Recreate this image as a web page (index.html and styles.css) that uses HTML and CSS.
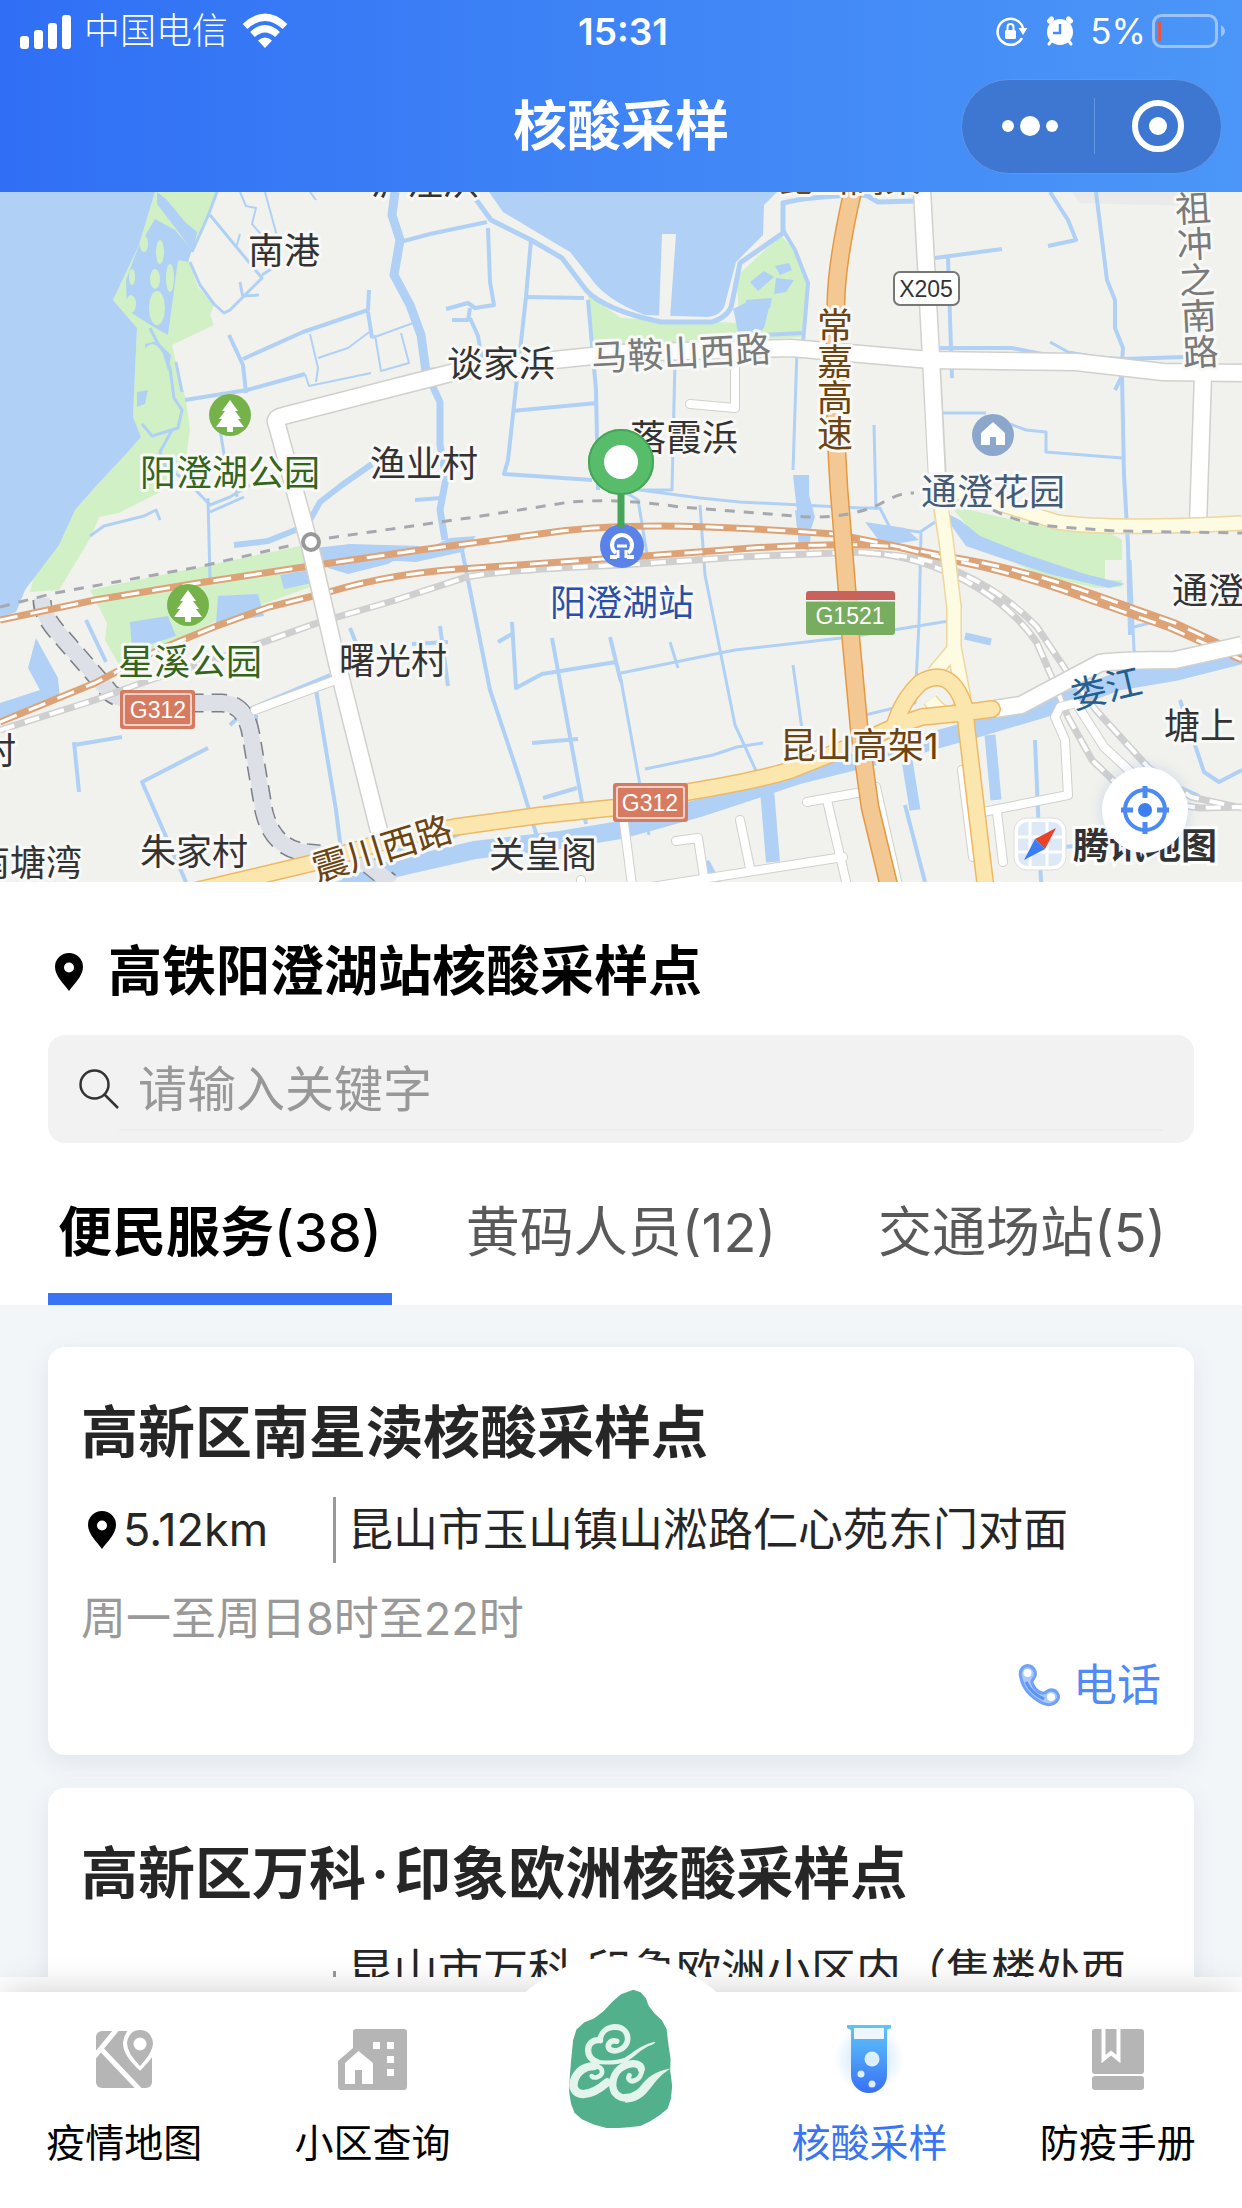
FILE: index.html
```html
<!DOCTYPE html>
<html lang="zh-CN">
<head>
<meta charset="utf-8">
<meta name="viewport" content="width=device-width, initial-scale=1">
<title>核酸采样</title>
<link rel="stylesheet" href="styles.css">
</head>
<body>
<div class="app">
  <header class="header">
    <div class="status">
      <div class="status-side">
        <svg class="i-signal" viewBox="0 0 52 38" aria-hidden="true"><g fill="#fff"><rect x="0" y="24" width="9" height="13" rx="3"/><rect x="14" y="18" width="9" height="19" rx="3"/><rect x="28" y="11" width="9" height="26" rx="3"/><rect x="42" y="3" width="9" height="34" rx="3"/></g></svg>
        <span class="carrier">中国电信</span>
        <svg class="i-wifi" viewBox="0 0 46 34" aria-hidden="true"><g fill="none" stroke="#fff" stroke-width="7"><path d="M3 12.500Q23-6 43 12.500"/><path d="M10.500 20.500Q23 9 35.500 20.500"/></g><path d="M23 34l-7-7.500Q23 20.500 30 26.500z" fill="#fff"/></svg>
      </div>
      <time class="clock">15:31</time>
      <div class="status-side status-right">
        <svg class="i-lock" viewBox="0 0 32 30" aria-hidden="true"><path d="M26 22A13 13 0 1 1 27 12" fill="none" stroke="#fff" stroke-width="2.500"/><path d="M22.500 12h9l-4.500 7z" fill="#fff"/><rect x="9" y="14" width="11" height="9" rx="1.500" fill="#fff"/><path d="M11.500 14v-3a3 3 0 0 1 6 0v3" fill="none" stroke="#fff" stroke-width="2"/></svg>
        <svg class="i-alarm" viewBox="0 0 28 30" aria-hidden="true"><g stroke="#fff" stroke-linecap="round" stroke-width="3"><path d="M6 24l-3 4M22 24l3 4"/><path d="M3.500 5l2-2M24.500 5l-2-2" stroke-width="5"/></g><circle cx="14" cy="16" r="13" fill="#fff"/><path d="M14 8v9H7" fill="none" stroke="#458bf6" stroke-width="2.500"/></svg>
        <span class="percent">5%</span>
        <svg class="i-battery" viewBox="0 0 74 34" aria-hidden="true"><rect x="1.500" y="1.500" width="63" height="31" rx="8" fill="none" stroke="#9cc3fb" stroke-width="3"/><path d="M69 11q8 6 0 12z" fill="#9cc3fb"/><rect x="6" y="7" width="3" height="20" rx="1" fill="#e8573f"/></svg>
      </div>
    </div>
    <div class="titlebar">
      <h1 class="page-title">核酸采样</h1>
      <div class="capsule">
        <button class="capsule-btn" type="button" aria-label="更多"><svg viewBox="0 0 58 20" width="58" height="20"><g fill="#fff"><circle cx="7" cy="10" r="6"/><circle cx="29" cy="10" r="10"/><circle cx="51" cy="10" r="6"/></g></svg></button>
        <button class="capsule-btn capsule-close" type="button" aria-label="关闭"><svg viewBox="0 0 52 52" width="52" height="52"><circle cx="26" cy="26" r="23" fill="none" stroke="#fff" stroke-width="6"/><circle cx="26" cy="26" r="9" fill="#fff"/></svg></button>
      </div>
    </div>
  </header>

  <section class="map" aria-label="地图">
    <svg class="map-canvas" viewBox="0 192 1242 690">
      <defs>
        <g id="tree"><circle r="21" fill="#76b24a"/><path d="M0-15l8 11h-3l6 8h-3l6 8H3v5h-6v-5h-11l6-8h-3l6-8h-3z" fill="#fff"/></g>
      </defs>
      <rect y="192" width="1242" height="690" fill="#f1f2ed"/>
      <path d="M1072 192h118v14l-110-3z" fill="#eaeaea"/>
      <!-- green land -->
      <g fill="#d1f0c5">
        <path d="M155 192H216L208 215 188 258 198 287 214 305 210 315 214 325 172 345 176 363 186 400 190 430 185 465 160 492 119 513 99 517 91 537 59 590 30 592 40 550 75 510 97 485 127 453 141 437 133 417 137 328 113 300 139 245z"/>
        <path d="M588 295L621 318 740 323 736 277 781 235 795 252 809 283 801 337 700 343 594 347z"/>
        <path d="M90 590L300 546 313 586 214 622 121 668 105 640 107 623z"/>
        <path d="M950 505L1000 517 1060 530 1110 533 1122 540V560H1105V580H1122V587L1096 588 1040 575 985 548z"/>
      </g>
      <!-- lakes and ponds -->
      <g fill="#b0d1f5">
        <path d="M0 192H155L139 245 113 300 137 328 133 417 141 437 127 453 97 485 75 510 59 545 25 590 16 612 0 618z"/>
        <path d="M489 192L503 212 570 252 590 277Q605 300 645 315L708 317Q724 315 726 300L736 262 763 235 764 205 777 192z"/>
        <path d="M155 219L175 230 192 250 188 262 178 260 174 290 168 335 152 326 127 310 126 280 138 248z"/>
        <path d="M157 192l10 8 18 22 12 10-4 20-16-22-20-26z"/>
        <path d="M145 344l12-3 14 14-3 18-11 10-12-10zM137 392l11-2-3 14-8 3z"/>
        <path d="M736 325l-2-8 16-8 20 7-5 20-14 12-12-7z" transform="translate(-1 -8)"/>
        <path d="M750 282l14-11 10 6-16 14zM776 278l18 2-8 12-12 2zM746 300l26-2-2 10-24 4zM775 266l14-3 3 7-12 5z"/>
        <path d="M793 475l16 0 0 20 6 22-6 18-10-6zM795 510l18 5-4 36-10-4z"/>
        <path d="M218 596l40-2 6 22-48 8zM280 575l34-6-2 14-28 6zM130 622l38-6 8 20-44 14z"/>
        <path d="M315 548l35-4 70 2-32 18-40 10-20-6zM380 560l40-8 30-14 26-2-14 16-46 10z"/>
        <path d="M865 522l40 6 14 12-36 6zM940 510l20 10 20 16 45 18 60 20 40 10-16 4-60-14-60-20-23-8z"/>
        <path d="M0 703l40-13-12-22 8-30 22 40 2 22-60 22z"/>
      </g>
      <path d="M662 234h14l-6 84h-11z" fill="#f1f2ed"/>
      <!-- canals -->
      <g fill="none" stroke="#b0d1f5" stroke-width="4" stroke-linejoin="round">
        <path d="M475 198L491 220 531 240 562 258 586 290Q604 310 661 322L712 322Q730 316 732 303L740 263 783 233 783 203Q810 196 866 195L878 202 916 201" stroke-width="5"/>
        <path d="M783 230L795 250 808 283 803 343M740 320V340M760 335l44-2"/>
        <path d="M395 192L392 215 400 240 394 275 410 305 421 335 426 372" stroke-width="9"/>
        <path d="M400 242L430 234 487 222M488 228L490 282 494 305 475 308 468 303 446 309M470 308l-2 12-16 0M470 318l8 18 4 24M531 240L526 297 519 360 508 460 504 474 592 480"/>
        <path d="M526 297l58 1M588 300l8 90 2 100M512 411l85-8"/>
        <path d="M217 192l-9 24-16 36M210 215L262 278 244 296 230 310 224 313 214 304 200 285 190 262M262 275l12-8M243 298l-3-16M244 296l15-1" stroke-width="3"/>
        <path d="M240 192l6 14 10 2-4 16 12 14M265 192l12 44M310 192l6 8M240 234l-4 14" stroke-width="2"/>
        <path d="M229 335L243 365 246 393M243 359L303 332 368 310 369 290M368 312l4 26M185 400l62-10 58-16"/>
        <path d="M372 338l44-16-4-20M310 334l8 34-2 14M318 358l30-10 24-18M375 335l6 36 28-8-8-30M305 374l4 12 62-13" stroke-width="2"/>
        <path d="M188 258q-18-4-20 30l-8 40M150 328l20 40 4 30 8 12-4 18-26 8-10-12M176 362l6 30M172 430l-12 22 6 16 20 12 24 25 20-8 20-12" stroke-width="3"/>
        <path d="M208 498L210 580M90 536l14-10 40-10 12-6 4 10M210 512l34-15M220 430l5 30 10 22 2 15" stroke-width="3"/>
        <path d="M310 520L320 502 342 485 372 464M234 545l34-4 30-12" stroke-width="6"/>
        <path d="M426 372L440 402V445L446 478 440 510 445 540" stroke-width="7"/>
        <path d="M426 370l30-2M415 500l26-2"/>
        <path d="M675 360L672 490 625 490M797 350l-4 120M640 490l60 8 40 4 120 6 20 0 10 20 30 4 15-10M874 425l2 85M700 505l5 70 30 150 34 74M622 490l16 10 10 60" stroke-width="3"/>
        <path d="M935 258l67-9M948 258l4 120M932 348l80 0 30 6 80 5 62-2M1050 192l18 28 8 20-28 6M1096 192l11 88 8 20 0 28 8 20-2 30-6 12M1122 375l2 100 4 70 2 90" stroke-width="4"/>
        <path d="M1050 342l18 10 24 4M940 413h46M1010 424l16 6 20 2v20l76 6" stroke-width="3"/>
        <path d="M1130 560l4 90 12 18-16 20M1134 627l20-5M621 673L735 650 850 637 955 620M621 680l28 155M670 642l8 26M793 665l14 100M645 769l68-14 24-8 26-4M807 752l40-8M865 715l50-12 4-80 2-90" stroke-width="3"/>
        <path d="M965 636l26 6" stroke-width="7"/>
        <path d="M460 540l10 50 20 100 30 90 18 60M498 642l14-8M512 622l4 66 26-14 74-12M552 638l34 186M532 743l46-4M543 798l34-10M540 845l80-20M412 644l36-2M440 626l8 60M610 637l11 45"/>
        <path d="M350 628l16 40M316 690l20 120 10 80M230 725l15-14 85-36M256 715v44M208 748l-66 34 44 100M74 742l5 50M74 745l48-8M86 620l20 42" stroke-width="4"/>
        <path d="M346 850l20-4M380 848q40 6 66-8l40-18 34-2" stroke-width="4"/>
        <path d="M703 862l12 20M905 805l20 77M1035 740l6 142M1045 865l20-18 35-4M1180 700l24 72 15 10 23-12M1094 710l60 66 45 20"/>
      </g>
      <g fill="none" stroke="#b0d1f5" stroke-width="18">
        <path d="M330 894L396 868 475 850 560 840 621 830 700 808 799 775 900 750 978 728 1056 705 1116 682 1175 672 1242 655"/>
        <path d="M767 790l6 72" stroke-width="14"/><path d="M705 862l14 26" stroke-width="9"/><path d="M990 735l6 65M907 760l8 50" stroke-width="11"/>
      </g>
      <!-- island patches inside the wetland -->
      <g fill="#d1f0c5"><ellipse cx="157" cy="308" rx="8" ry="17"/><ellipse cx="160" cy="252" rx="4" ry="12"/><ellipse cx="155" cy="279" rx="5" ry="10"/><ellipse cx="131" cy="304" rx="5" ry="9"/><ellipse cx="170" cy="278" rx="4" ry="14"/><ellipse cx="132" cy="277" rx="3" ry="8"/><ellipse cx="144" cy="244" rx="4" ry="8"/><path d="M145 348q10-10 18 6l6 20-8 10q-14 2-16-10z"/></g>
      <!-- closed tunnel band -->
      <g fill="none" stroke-linejoin="round">
        <path d="M42 600Q42 616 60 635L108 690Q115 702 158 703H222Q246 704 251 735L262 800Q268 850 310 853L360 858 390 882" stroke="#7d7f88" stroke-width="19" stroke-dasharray="14 8"/>
        <path d="M42 598Q42 616 60 635L108 690Q115 702 158 703H222Q246 704 251 735L262 800Q268 850 310 853L360 858 392 884" stroke="#dde0e6" stroke-width="16"/>
      </g>
      <!-- railways -->
      <g fill="none">
        <g stroke="#cfcfcf" stroke-width="7">
          <path d="M0 730L95 700 150 680 222 657 317 623 396 600 467 577Q500 570 621 565L740 557 835 553Q898 548 958 577 1010 603 1037 643L1053 680 1068 717 1092 760 1120 787"/>
          <path d="M866 553Q930 556 958 572 1005 593 1037 627L1068 673 1096 710 1148 767 1191 797 1242 808M1180 805l20 3 42-1"/>
        </g>
        <g stroke="#fff" stroke-width="4" stroke-dasharray="15 11">
          <path d="M0 730L95 700 150 680 222 657 317 623 396 600 467 577Q500 570 621 565L740 557 835 553Q898 548 958 577 1010 603 1037 643L1053 680 1068 717 1092 760 1120 787"/>
          <path d="M866 553Q930 556 958 572 1005 593 1037 627L1068 673 1096 710 1148 767 1191 797 1242 808M1180 805l20 3 42-1"/>
        </g>
        <g stroke="#dda377" stroke-width="7">
          <path d="M0 620L95 600 198 583 317 565 420 550 554 532Q600 526 660 526T835 534L950 557Q1020 568 1096 595L1175 623 1242 654"/>
          <path d="M0 722L95 683 158 650 214 627 269 607 329 592Q396 572 475 568L645 556 752 548Q850 542 898 547L960 562Q1020 574 1090 600L1170 628 1242 660"/>
        </g>
        <g stroke="#fff" stroke-width="3" stroke-dasharray="18 13">
          <path d="M0 620L95 600 198 583 317 565 420 550 554 532Q600 526 660 526T835 534L950 557Q1020 568 1096 595L1175 623 1242 654"/>
          <path d="M0 722L95 683 158 650 214 627 269 607 329 592Q396 572 475 568L645 556 752 548Q850 542 898 547L960 562Q1020 574 1090 600L1170 628 1242 660"/>
        </g>
      </g>
      <!-- roads -->
      <g fill="none" stroke-linejoin="round">
        <g stroke="#d0d0cd" stroke-width="19">
          <path d="M380 835L337 663 311 550 277 425Q273 418 283 416L396 387 455 372 554 360 621 353 791 348 930 360 1076 362 1163 372 1242 373"/>
          <path d="M922 190L931 357 938 490M1203 376L1198 524"/>
          <path d="M995 709L1021 705 1068 680 1100 663Q1120 660 1175 660L1242 645"/>
        </g>
        <g stroke="#d0d0cd" stroke-width="10" stroke-linecap="round">
          <path d="M735 360V408L690 404M255 710L333 681M807 802L862 792M827 800L848 890M876 787L899 890M651 887L843 857M740 820L750 868M676 841L698 838 704 877M962 770L973 857M983 812L1068 795 1065 740 1055 717 1060 707 1076 703 1104 747 1132 773M997 812L1003 862M581 880v8M624 823l8 62"/>
        </g>
        <g stroke="#fff" stroke-width="8" stroke-linecap="round">
          <path d="M735 360V408L690 404M255 710L333 681M807 802L862 792M827 800L848 890M876 787L899 890M651 887L843 857M740 820L750 868M676 841L698 838 704 877M962 770L973 857M983 812L1068 795 1065 740 1055 717 1060 707 1076 703 1104 747 1132 773M997 812L1003 862M581 880v8M624 823l8 62"/>
        </g>
        <g stroke="#fff" stroke-width="16">
          <path d="M380 835L337 663 311 550 277 425Q273 418 283 416L396 387 455 372 554 360 621 353 791 348 930 360 1076 362 1163 372 1242 373"/>
          <path d="M922 190L931 357 938 500M1203 376L1198 524"/>
          <path d="M995 709L1021 705 1068 680 1100 663Q1120 660 1175 660L1242 645"/>
        </g>
        <path d="M938 490L946 540 954 607V647L964 700M938 490Q970 492 997 503L1057 522Q1110 530 1242 523M956 647L934 673M930 700q18 24 32 6" stroke="#ecd79f" stroke-width="16"/>
        <path d="M938 486L946 540 954 607V647L964 700M938 490Q970 492 997 503L1057 522Q1110 530 1242 523M956 647L934 673M930 700q18 24 32 6" stroke="#fefbe3" stroke-width="13"/>
        <path d="M190 892L317 862 396 838 455 827 543 815 621 807 688 792Q760 780 791 770L859 743 898 725 922 717 962 713 992 709M894 727Q902 700 920 683 950 665 964 705L974 790 986 890" stroke="#efb863" stroke-width="18" stroke-linecap="round"/>
        <path d="M190 892L317 862 396 838 455 827 543 815 621 807 688 792Q760 780 791 770L859 743 898 725 922 717 962 713 992 709M894 727Q902 700 920 683 950 665 964 705L974 790 986 890" stroke="#fbe6ae" stroke-width="15" stroke-linecap="round"/>
        <path d="M853 190Q837 260 836 300 833 400 839 490L843 540 851 640 859 727 870 807 890 890" stroke="#e59841" stroke-width="19"/>
        <path d="M853 190Q837 260 836 300 833 400 839 490L843 540 851 640 859 727 870 807 890 890" stroke="#f3c893" stroke-width="16"/>
        <path d="M0 607L55 593 198 567 293 545M329 538L475 517 570 502Q620 498 680 507L807 517Q850 518 880 504 900 492 914 493M993 510Q1020 524 1060 527L1116 531 1242 533" stroke="#a6a8b0" stroke-width="3" stroke-dasharray="10 9"/>
      </g>
      <circle cx="311" cy="542" r="8" fill="#fff" stroke="#999" stroke-width="4"/>

      <!-- road shields -->
      <g class="shield">
        <rect x="894" y="272" width="65" height="33" rx="6" fill="#fff" stroke="#777" stroke-width="2"/><text x="926" y="297" fill="#333">X205</text>
        <g fill="#d77b60"><rect x="120" y="690" width="75" height="39" rx="3"/><rect x="613" y="783" width="75" height="39" rx="3"/></g>
        <g fill="none" stroke="#f3d3c9" stroke-width="2"><rect x="124" y="694" width="67" height="31" rx="2"/><rect x="617" y="787" width="67" height="31" rx="2"/></g>
        <g fill="#fff"><text x="158" y="718">G312</text><text x="650" y="811">G312</text></g>
        <path d="M806 601h89v31q0 3-3 3h-83q-3 0-3-3z" fill="#78ac5e"/><path d="M806 600v-6q0-3 3-3h83q3 0 3 3v6z" fill="#c9615c"/><path d="M806 601h89" stroke="#fff"/>
        <text x="850" y="624" fill="#fff">G1521</text>
      </g>

      <!-- place names -->
      <g class="place">
        <text x="371" y="195">泸泾浜</text><text x="777" y="192" class="highway">昆山高架</text>
        <text x="248" y="264">南港</text><text x="447" y="377">谈家浜</text><text x="370" y="477">渔业村</text><text x="630" y="451">落霞浜</text>
        <text x="339" y="674">曙光村</text><text x="1172" y="604">通澄</text><text x="1164" y="739">塘上</text><text x="-20" y="764">村</text>
        <text x="-26" y="876">南塘湾</text><text x="140" y="865">朱家村</text><text x="489" y="868">关皇阁</text>
        <g class="park"><text x="140" y="486">阳澄湖公园</text><text x="118" y="675">星溪公园</text></g>
        <text x="921" y="505" class="estate">通澄花园</text>
        <text x="550" y="616" class="station">阳澄湖站</text>
        <text x="592" y="371" class="street" transform="rotate(-3 592 371)">马鞍山西路</text>
        <text x="780" y="759" class="highway">昆山高架1</text>
        <text x="317" y="882" class="highway" transform="rotate(-17 317 882)">震川西路</text>
        <text x="1074" y="709" class="river" transform="rotate(-13 1074 709)">娄江</text>
        <text x="832" y="307" class="highway vertical">常嘉高速</text>
        <text x="1189" y="190" class="street vertical" transform="rotate(-3 1189 190)">祖冲之南路</text>
      </g>

      <use href="#tree" x="230" y="415"/><use href="#tree" x="188" y="605"/>
      <g transform="translate(993 435)"><circle r="21" fill="#8ba8cc"/><path d="M0-13l12 11V10H3V2h-6v8h-9V-2z" fill="#fff"/></g>
      <g transform="translate(622 546)"><circle r="22" fill="#5b82e8"/><path d="M-5 11H-12M12 11H5M-6 7a10 10 0 1 1 12 0" fill="none" stroke="#fff" stroke-width="4"/><path d="M-5 0H5M-4 4v8M4 4v8" stroke="#fff" stroke-width="3"/></g>
      <path d="M621 490v38" stroke="#46a657" stroke-width="7"/><circle cx="621" cy="462" r="25" fill="#fff" stroke="#57bd6a" stroke-width="16"/><circle cx="621" cy="462" r="32" fill="none" stroke="#46a657" stroke-width="2"/>

      <!-- map provider mark -->
      <rect x="1014" y="818" width="52" height="52" rx="13" fill="#fff" stroke="#ddd"/>
      <rect x="1018" y="822" width="44" height="44" rx="9" fill="#dde9f7"/>
      <path d="M1030 822v44M1047 822v44M1018 837h44M1018 852h44" stroke="#fff" stroke-width="3"/>
      <path d="M1056 828l-11 21-10-10z" fill="#ea4228"/><path d="M1024 860l11-21 10 10z" fill="#3a7ef6"/>
      <text x="1073" y="859" class="brand">腾讯地图</text>
    </svg>
    <button class="locate" type="button" aria-label="定位"><svg viewBox="0 0 50 50" width="50" height="50"><circle cx="25" cy="25" r="20" fill="none" stroke="#4a8af2" stroke-width="4"/><path d="M25 1v12M25 37v12M1 25h12M37 25h12" stroke="#4a8af2" stroke-width="5"/><circle cx="25" cy="25" r="7" fill="#3c7df0"/></svg></button>
  </section>

  <section class="panel">
    <h2 class="current"><svg class="pin" viewBox="0 0 28 38" aria-hidden="true"><path fill-rule="evenodd" d="M14 0a14 14 0 0 1 14 14c0 9-9 17-14 24C9 31 0 23 0 14A14 14 0 0 1 14 0zm0 9.500a5 5 0 1 0 0 10 5 5 0 0 0 0-10z"/></svg>高铁阳澄湖站核酸采样点</h2>
    <label class="search">
      <svg class="search-icon" viewBox="0 0 40 40" aria-hidden="true"><g fill="none" stroke="#333" stroke-width="2.500"><circle cx="15.500" cy="15.500" r="14"/><path d="M25.500 25.500L39 39"/></g></svg>
      <input class="search-input" type="text" placeholder="请输入关键字" aria-label="请输入关键字">
    </label>
    <nav class="tabs">
      <button class="tab tab-active" type="button">便民服务<span class="count">(38)</span></button>
      <button class="tab" type="button">黄码人员<span class="count">(12)</span></button>
      <button class="tab" type="button">交通场站<span class="count">(5)</span></button>
    </nav>
  </section>

  <main class="list">
    <article class="card">
      <h3 class="card-title">高新区南星渎核酸采样点</h3>
      <div class="card-row">
        <span class="distance"><svg class="pin" viewBox="0 0 28 38" aria-hidden="true"><path fill-rule="evenodd" d="M14 0a14 14 0 0 1 14 14c0 9-9 17-14 24C9 31 0 23 0 14A14 14 0 0 1 14 0zm0 9.500a5 5 0 1 0 0 10 5 5 0 0 0 0-10z"/></svg>5.12km</span>
        <span class="address">昆山市玉山镇山淞路仁心苑东门对面</span>
      </div>
      <p class="hours">周一至周日8时至22时</p>
      <a class="phone" href="#phone"><svg class="phone-icon" viewBox="0 0 44 44" aria-hidden="true"><path d="M4 15C1 6 8 1 13 3c5 2 7 8 4 12-2 3-3 4-1 7 2 4 5 7 9 8 3 1 4-2 8-3 6-1 10 5 8 9-3 6-10 7-16 4C14 34 6 26 4 15z" fill="#a9c8fb" stroke="#6fa1f8" stroke-width="3"/><path d="M9 19q6 12 18 17" fill="none" stroke="#5b93f7" stroke-width="3"/><circle cx="10.500" cy="10" r="4" fill="#fff"/><circle cx="34" cy="34" r="4" fill="#fff"/></svg>电话</a>
    </article>
    <article class="card">
      <h3 class="card-title">高新区万科<span class="dot">·</span>印象欧洲核酸采样点</h3>
      <div class="card-row card-row-tall">
        <span class="distance"></span>
        <span class="address">昆山市万科·印象欧洲小区内（售楼处西</span>
      </div>
    </article>
  </main>

  <nav class="tabbar">
    <a class="tabbar-item" href="#map"><svg class="tabbar-icon" viewBox="0 0 70 82" aria-hidden="true"><rect x="7" y="11" width="56" height="57" rx="6" fill="#b5b5b5"/><g fill="none" stroke="#fff" stroke-width="5"><path d="M28 9L5 37M13 30L51 70"/><path d="M51 48C40 38 36 31 36 23Q38 8 51 8T66 23C66 31 61 38 51 48z" fill="#b5b5b5" stroke-width="4"/></g><path d="M51 46C43 37 39 31 39 24a12 12 0 0 1 24 0C63 31 59 37 51 46z" fill="#b5b5b5"/><circle cx="51" cy="24" r="6.500" fill="#fff"/></svg>疫情地图</a>
    <a class="tabbar-item" href="#area"><svg class="tabbar-icon" viewBox="0 0 70 82" aria-hidden="true"><path d="M15 12q0-3 3-3h48q3 0 3 3v66q0 4-3 4" fill="none"/><path d="M15 12q0-3 3-3h48q3 0 3 3v54q0 4-3 4H3q-3 0-3-4V41l15-13z" fill="#b5b5b5"/><path d="M7 64V43l13.500-12L35 43v21H24V50h-7v14z" fill="#fff"/><g fill="#fff"><rect x="35" y="22" width="7" height="7"/><rect x="49" y="22" width="7" height="7"/><rect x="49" y="36" width="7" height="7"/><rect x="49" y="49" width="7" height="7"/></g></svg>小区查询</a>
    <a class="tabbar-home" href="#home" aria-label="首页"><svg class="home-logo" viewBox="144 86 315 418">
      <path d="M340 88l22 8 16 18 8 22 18 24 22 20 14 26 6 50 6 40-1 36 6 46-4 38-10 30-24 20-28 18-30 14-34 4-60 4-44-12-38-16-22-20-10-26-6-36 2-46 4-50 6-60 10-32 24-22 30-12 28-22 26-28 26-22z" fill="#52b18c"/>
      <g fill="none" stroke="#e3f4ed" stroke-linecap="round" stroke-linejoin="round">
        <path d="M290 243C268 238 258 258 270 268 286 278 314 268 322 244 328 214 306 200 284 200 260 202 242 216 240 240" stroke-width="17"/>
        <path d="M240 240C216 238 204 252 204 270 204 290 216 300 232 306" stroke-width="19"/>
        <path d="M226 305Q280 312 320 298" stroke-width="12"/>
        <path d="M215 348C222 356 240 352 246 338 248 324 236 316 214 318" stroke-width="14"/>
        <path d="M222 318C186 318 162 344 160 374 160 392 172 402 190 402 222 400 244 382 262 366" stroke-width="25"/>
        <path d="M328 346C322 356 330 366 342 362 358 358 366 342 366 326" stroke-width="15"/>
        <path d="M364 326C362 312 344 308 328 312 296 320 278 344 278 376 280 402 298 414 320 414" stroke-width="22"/>
      </g>
      <g fill="#e3f4ed">
        <path d="M296 302C330 290 352 256 406 245 404 252 396 254 390 256 368 264 346 288 318 306z"/>
        <path d="M312 402C340 402 356 388 372 366 394 342 420 330 452 325 424 342 408 362 392 384 372 410 350 428 316 428z"/>
      </g></svg></a>
    <a class="tabbar-item tabbar-active" href="#test"><svg class="tabbar-icon" viewBox="0 0 70 82" aria-hidden="true"><defs><linearGradient id="tube" x1="0" y1="0" x2="0" y2="1"><stop offset="0" stop-color="#60c4f6"/><stop offset=".35" stop-color="#52aaf8"/><stop offset="1" stop-color="#3970f5"/></linearGradient><radialGradient id="halo"><stop offset=".3" stop-color="#cfe8fd"/><stop offset="1" stop-color="#fff"/></radialGradient></defs><rect y="4" width="70" height="70" fill="url(#halo)"/><path d="M13 5h44v3l-4 2v45a18 18 0 0 1-36 0V10l-4-2z" fill="url(#tube)"/><rect x="20" y="8" width="30" height="11" fill="#eef7fe"/><g fill="#dceffd"><circle cx="38" cy="39" r="7.500"/><circle cx="27" cy="54" r="3.500"/><circle cx="38" cy="64" r="3.500"/></g></svg>核酸采样</a>
    <a class="tabbar-item" href="#book"><svg class="tabbar-icon" viewBox="0 0 70 82" aria-hidden="true"><g fill="#b5b5b5"><rect x="9" y="9" width="52" height="45" rx="3"/><rect x="9" y="56" width="52" height="14" rx="3"/></g><path d="M20.500 7V39l7.500-6 7.500 6V7" fill="none" stroke="#fff" stroke-width="4"/></svg>防疫手册</a>
  </nav>
</div>
</body>
</html>
```

FILE: styles.css
```css
* { box-sizing: border-box; }
body {
  margin: 0;
  background: #fff;
  font-family: Inter, "Noto Sans CJK SC", sans-serif;
  color: #000;
}
h1, h2, h3, p { margin: 0; }
button { border: 0; padding: 0; background: none; font: inherit; color: inherit; }
a { color: inherit; text-decoration: none; }
svg { display: block; flex: none; }

.app { display: flex; flex-direction: column; height: 100vh; overflow: hidden; }

/* header */
.header { flex: none; background: linear-gradient(90deg, #306ff5, #3f84f6 50%, #4b96f8); color: #fff; }
.status {
  display: grid;
  grid-template-columns: 1fr auto 1fr;
  align-items: center;
  height: 62px;
  padding: 0 16px 0 20px;
  font-size: 36px;
}
.status-side { display: flex; align-items: center; }
.status-right { justify-content: flex-end; }
.i-signal { width: 52px; height: 38px; margin-right: 12px; }
.carrier { font-weight: 300; line-height: 54px; }
.i-wifi { width: 46px; height: 40px; margin-left: 14px; }
.clock { font-weight: 600; font-size: 37px; }
.i-lock { width: 32px; height: 30px; margin-right: 18px; }
.i-alarm { width: 28px; height: 32px; margin-right: 16px; }
.percent { font-size: 35px; margin-right: 6px; }
.i-battery { width: 74px; height: 34px; }
.titlebar {
  display: grid;
  grid-template-columns: 1fr auto 1fr;
  align-items: center;
  height: 130px;
  padding: 0 20px 2px;
}
.page-title { grid-column: 2; padding-top: 2px; font-size: 54px; line-height: 80px; font-weight: 600; }
.capsule {
  justify-self: end;
  display: flex;
  align-items: center;
  width: 261px;
  height: 95px;
  border: 1px solid #6297e2;
  border-radius: 48px;
  background: #3d77d1;
}
.capsule-btn { flex: 1; display: flex; align-items: center; justify-content: center; height: 56px; padding-left: 5px; }
.capsule-close { border-left: 1px solid #6297e2; padding: 0; }

/* map */
.map { position: relative; flex: none; overflow: hidden; }
.map-canvas { width: 100%; height: auto; }
.place {
  font-size: 36px;
  fill: #333;
  stroke: #f8f9f7;
  stroke-width: 6px;
  stroke-linejoin: round;
  paint-order: stroke;
}
.place .park { fill: #35651d; }
.place .estate { fill: #465a76; }
.place .station { fill: #2b4fa6; }
.place .street { fill: #7a7a7a; }
.place .highway { fill: #6b4410; }
.place .river { fill: #245f92; stroke: none; }
.place .vertical { writing-mode: vertical-rl; }
.shield { font: 23px "Liberation Sans", Arial, sans-serif; text-anchor: middle; }
.brand { font-size: 36px; font-weight: 700; fill: #333; stroke: #fff; stroke-width: 6px; paint-order: stroke; }
.locate {
  position: absolute;
  right: 54px;
  bottom: 29px;
  display: flex;
  align-items: center;
  justify-content: center;
  width: 86px;
  height: 86px;
  border-radius: 50%;
  background: #fff;
  box-shadow: 0 0 14px rgba(60, 110, 220, .2);
}

/* search panel */
.panel { flex: none; padding: 50px 48px 0; }
.current {
  display: flex;
  align-items: center;
  gap: 25px;
  padding-left: 7px;
  font-size: 54px;
  line-height: 80px;
  font-weight: 600;
}
.pin { width: 28px; height: 38px; }
.search {
  display: flex;
  align-items: center;
  height: 108px;
  margin-top: 23px;
  padding: 0 31px;
  border-radius: 17px;
  background: #f2f2f2;
}
.search-icon { width: 40px; height: 40px; }
.search-input {
  flex: 1;
  min-width: 0;
  height: 84px;
  padding: 2px 0 0 19px;
  border: 0;
  border-bottom: 2px solid #ededed;
  outline: 0;
  background: none;
  font: 49px Inter, "Noto Sans CJK SC", sans-serif;
}
.search-input::placeholder { color: #989898; opacity: 1; }
.tabs { display: flex; justify-content: space-between; height: 162px; padding-top: 16px; }
.tab {
  width: 30%;
  padding-top: 14px;
  border-bottom: 12px solid transparent;
  font-size: 54px;
  line-height: 80px;
  color: #595959;
}
.tab-active { border-color: #3974f5; font-weight: 600; color: #000; }
.tab-active .count { font-weight: 500; }

/* result list */
.list {
  flex: 1;
  min-height: 0;
  overflow: hidden;
  display: flex;
  flex-direction: column;
  gap: 33px;
  padding: 42px 48px 0;
  background: #f3f6f9;
}
.card {
  flex: none;
  padding: 44px 33px 37px;
  border-radius: 17px;
  background: #fff;
  box-shadow: 0 8px 24px rgba(60, 90, 110, .1);
  font-size: 45px;
  line-height: 66px;
  color: #262626;
}
.card-title { font-size: 57px; line-height: 84px; font-weight: 600; }
.card-title .dot { padding: 0 5px; }
.card-row { display: flex; align-items: center; margin-top: 22px; }
.distance {
  display: flex;
  align-items: center;
  gap: 7px;
  width: 255px;
  height: 66px;
  padding-left: 7px;
  border-right: 3px solid #999;
  color: #262626;
}
.distance .pin { color: #000; }
.address { flex: 1; padding-left: 12px; white-space: nowrap; }
.card-row-tall .address { min-height: 132px; }
.hours { margin-top: 23px; color: #999; }
.phone {
  display: flex;
  align-items: center;
  justify-content: flex-end;
  gap: 12px;
  font-size: 44px;
  color: #4f8af6;
}
.phone-icon { width: 44px; height: 44px; }

/* bottom tab bar */
.tabbar {
  position: relative;
  flex: none;
  display: grid;
  grid-template-columns: repeat(5, 1fr);
  height: 216px;
  margin-top: 15px;
  background: #fff;
  box-shadow: 0 0 36px -4px rgba(0, 0, 0, .24);
}
.tabbar-item {
  display: flex;
  flex-direction: column;
  align-items: center;
  gap: 12px;
  padding-top: 28px;
  font-size: 39px;
  line-height: 58px;
}
.tabbar-icon { width: 70px; height: 82px; }
.tabbar-active { color: #3974f5; }
.tabbar-home { display: flex; justify-content: center; position: relative; }
.tabbar-home::before {
  content: "";
  position: absolute;
  top: -36px;
  left: 50%;
  width: 290px;
  height: 290px;
  margin-left: -145px;
  border-radius: 50%;
  background: #fff;
  clip-path: inset(0 0 240px 0);
}
.home-logo { position: relative; width: 105px; height: 139px; margin-top: -3px; }
```
